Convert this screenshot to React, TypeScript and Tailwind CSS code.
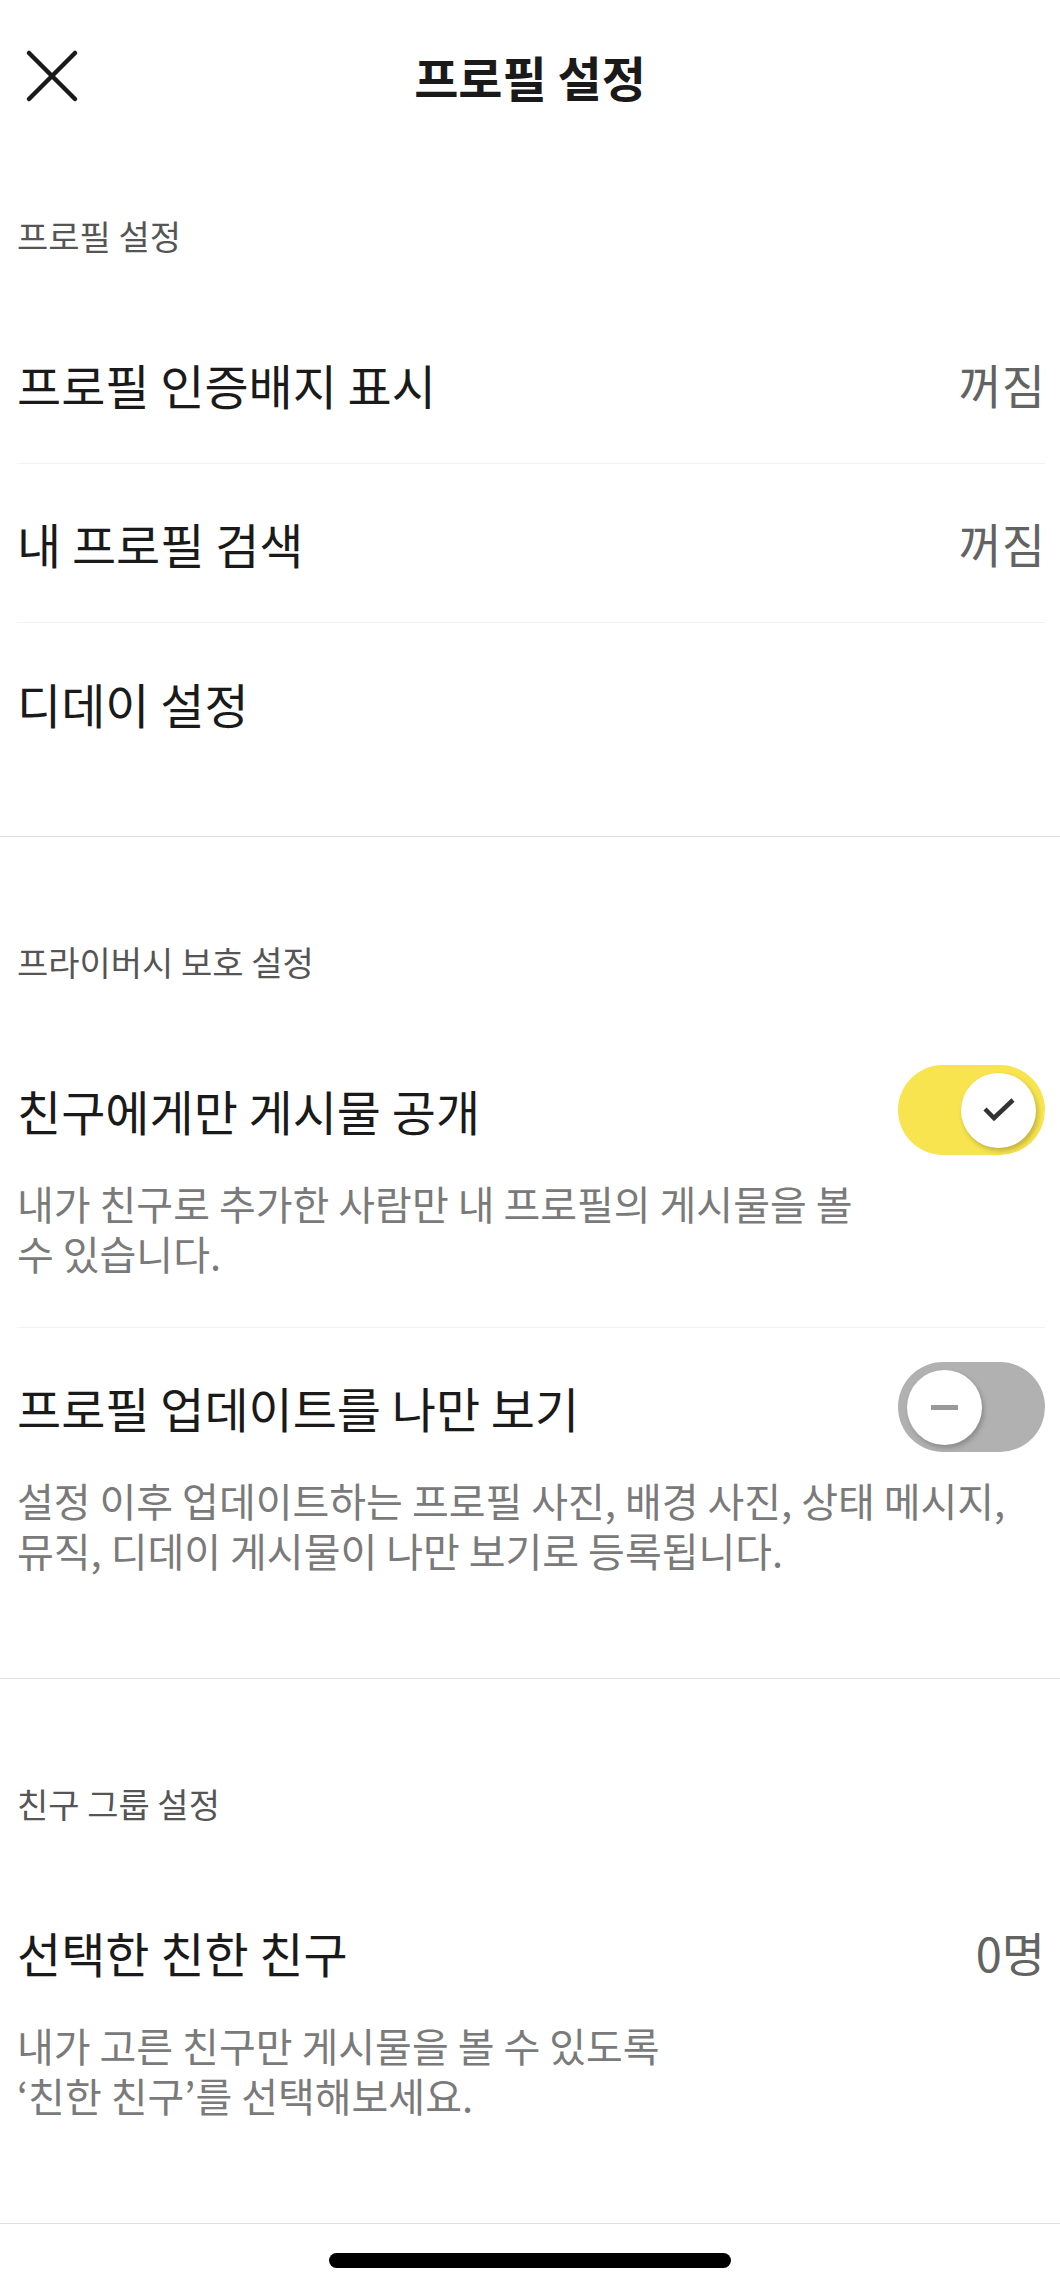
import * as React from "react";

const font = { fontFamily: '"Noto Sans CJK KR", "Noto Sans", sans-serif' };

function SectionLabel({ children, first = false }: { children: React.ReactNode; first?: boolean }) {
  return (
    <div
      className={`${first ? "pt-[64px]" : "pt-[105px]"} pb-[49px] pl-[17px] text-[34px] leading-[40px] text-[#555555]`}
    >
      {children}
    </div>
  );
}

function Toggle({ on }: { on: boolean }) {
  return (
    <div
      className={`flex h-[90px] w-[147px] shrink-0 items-center rounded-full px-[9px] ${
        on ? "justify-end bg-[#f7e44e]" : "justify-start bg-[#b1b1b1]"
      }`}
    >
      <div className="flex h-[75px] w-[75px] items-center justify-center rounded-full bg-white shadow-[2px_3px_5px_rgba(0,0,0,0.22)]">
        {on ? (
          <svg width="34" height="26" viewBox="0 0 34 26">
            <path d="M3 12 L12 21 L31 3" fill="none" stroke="#333333" strokeWidth="4.5" />
          </svg>
        ) : (
          <div className="h-[5px] w-[27px] bg-[#9a9a9a]" />
        )}
      </div>
    </div>
  );
}

function ValueRow({ title, value, divider }: { title: string; value?: string; divider?: boolean }) {
  return (
    <div className="pl-[17px] pr-[15px]">
      <div
        className={`flex h-[159px] items-center justify-between ${divider ? "border-b border-[#f2f2f2]" : ""}`}
      >
        <span className="text-[48px] leading-[60px] text-[#1a1a1a]">{title}</span>
        {value && <span className="text-[47px] leading-[60px] text-[#636363]">{value}</span>}
      </div>
    </div>
  );
}

function ToggleRow({
  title,
  lines,
  on,
  divider,
}: {
  title: string;
  lines: string[];
  on: boolean;
  divider?: boolean;
}) {
  return (
    <div className="pl-[17px] pr-[15px]">
      <div className={`pt-[49px] pb-[49px] ${divider ? "border-b border-[#f2f2f2]" : ""}`}>
        <div className="flex h-[60px] items-center justify-between">
          <span className="text-[48px] leading-[60px] text-[#1a1a1a]">{title}</span>
          <Toggle on={on} />
        </div>
        <div className="mt-[38px] text-[40px] leading-[50px] text-[#7a7a7a]">
          {lines.map((l) => (
            <span key={l} className="block whitespace-nowrap">
              {l}
            </span>
          ))}
        </div>
      </div>
    </div>
  );
}

export default function App() {
  return (
    <div className="min-h-[2296px] w-[1060px] bg-white" style={font}>
      <header className="relative flex h-[152px] items-center justify-center">
        <button className="absolute left-[25px] top-[49px]">
          <svg width="54" height="54" viewBox="0 0 54 54">
            <path d="M4 4 L50 50 M50 4 L4 50" stroke="#1a1a1a" strokeWidth="4.5" strokeLinecap="round" />
          </svg>
        </button>
        <h1 className="text-[48px] font-bold leading-[60px] text-[#1a1a1a]">프로필 설정</h1>
      </header>

      <section className="pb-[54px]">
        <SectionLabel first>프로필 설정</SectionLabel>
        <ValueRow title="프로필 인증배지 표시" value="꺼짐" divider />
        <ValueRow title="내 프로필 검색" value="꺼짐" divider />
        <ValueRow title="디데이 설정" />
      </section>

      <div className="h-px bg-[#e0e0e0]" />

      <section className="pb-[54px]">
        <SectionLabel>프라이버시 보호 설정</SectionLabel>
        <ToggleRow
          title="친구에게만 게시물 공개"
          lines={["내가 친구로 추가한 사람만 내 프로필의 게시물을 볼", "수 있습니다."]}
          on
          divider
        />
        <ToggleRow
          title="프로필 업데이트를 나만 보기"
          lines={["설정 이후 업데이트하는 프로필 사진, 배경 사진, 상태 메시지,", "뮤직, 디데이 게시물이 나만 보기로 등록됩니다."]}
          on={false}
        />
      </section>

      <div className="h-px bg-[#e0e0e0]" />

      <section className="pb-[54px]">
        <SectionLabel>친구 그룹 설정</SectionLabel>
        <div className="pl-[17px] pr-[15px]">
          <div className="pt-[49px] pb-[49px]">
            <div className="flex h-[60px] items-center justify-between">
              <span className="text-[48px] leading-[60px] text-[#1a1a1a]">선택한 친한 친구</span>
              <span className="text-[47px] leading-[60px] text-[#636363]">0명</span>
            </div>
            <div className="mt-[38px] text-[40px] leading-[50px] text-[#7a7a7a]">
              <span className="block">내가 고른 친구만 게시물을 볼 수 있도록</span>
              <span className="block">‘친한 친구’를 선택해보세요.</span>
            </div>
          </div>
        </div>
      </section>

      <div className="h-px bg-[#e0e0e0]" />

      <div className="flex justify-center pt-[29px]">
        <div className="h-[15px] w-[402px] rounded-full bg-black" />
      </div>
    </div>
  );
}
